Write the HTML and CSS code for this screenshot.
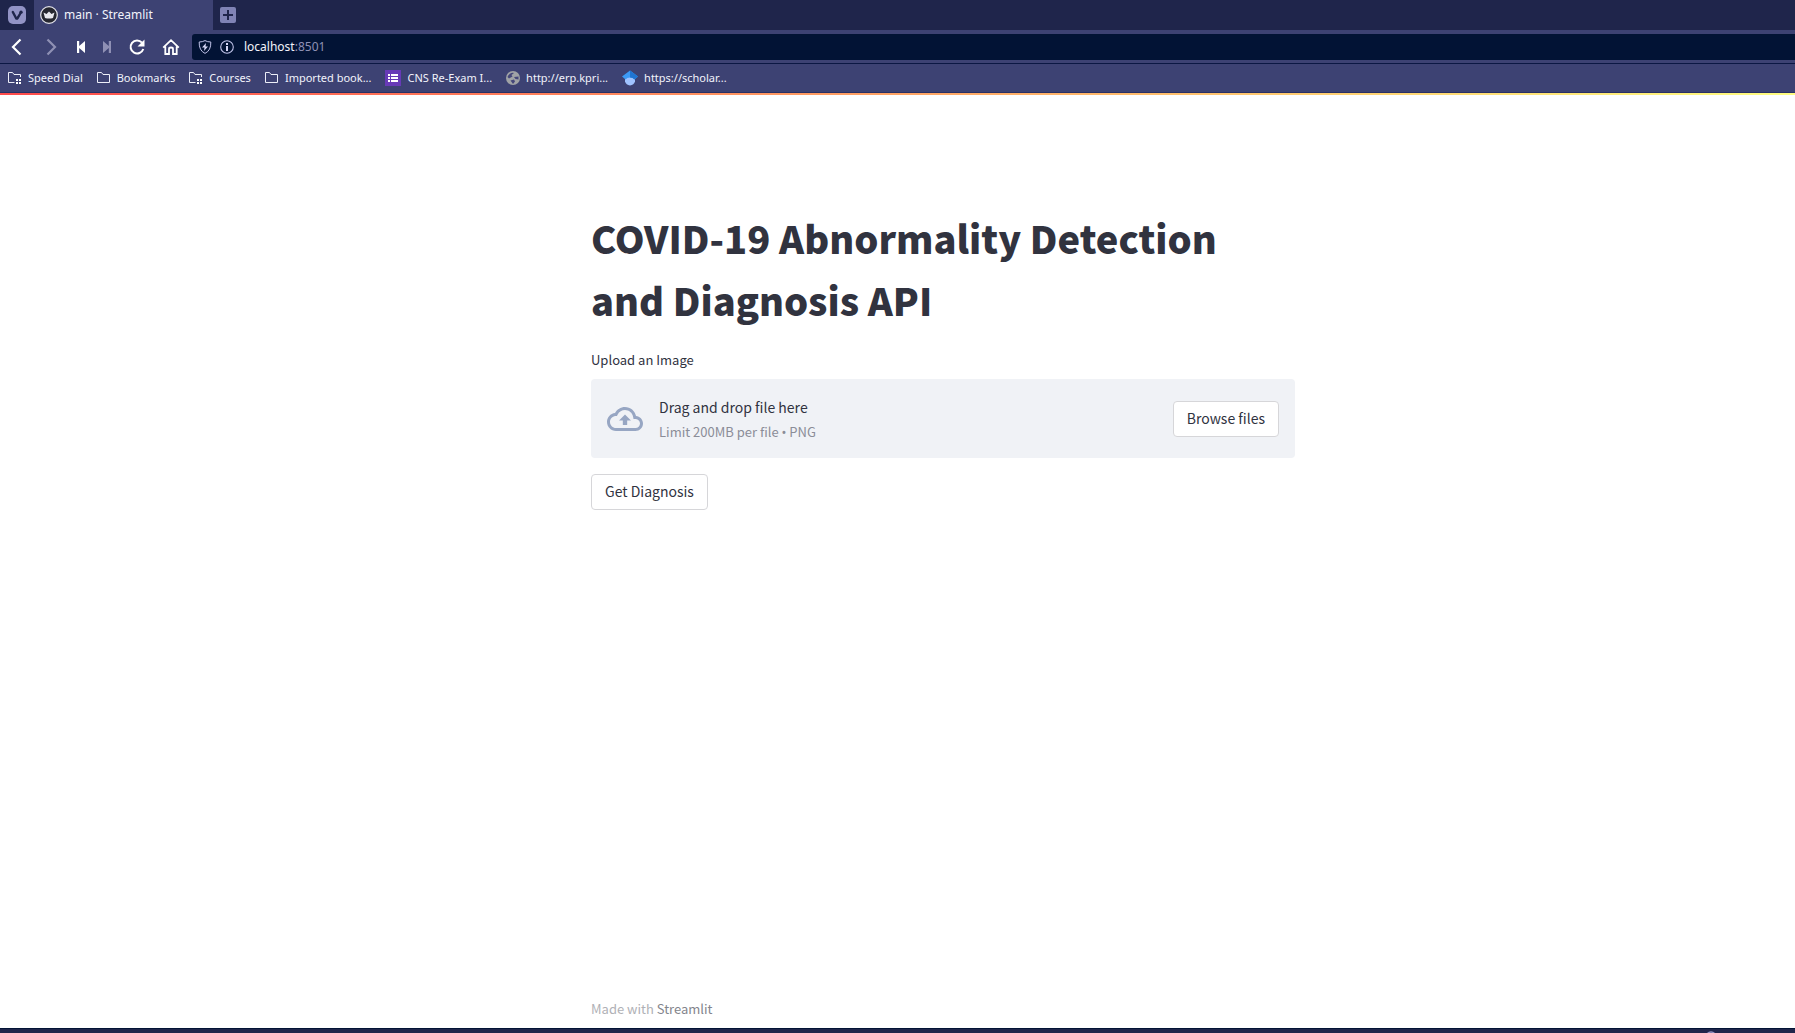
FILE: index.html
```html
<!DOCTYPE html>
<html lang="en">
<head>
<meta charset="utf-8">
<title>main · Streamlit</title>
<link rel="stylesheet" href="styles.css">
</head>
<body>
<header class="browser">
  <div class="tabs">
    <button class="icon-btn menu" aria-label="Menu">
      <svg width="18" height="18" viewBox="0 0 18 18"><rect width="18" height="18" rx="5" fill="#9293c5"/><path d="M4.800 6 8 12q.8 1.300 1.600 0L12 8" fill="none" stroke="#1f254b" stroke-width="2.400" stroke-linecap="round" stroke-linejoin="round"/><circle cx="13" cy="6.200" r="1.700" fill="#1f254b"/></svg>
    </button>
    <div class="tab">
      <svg width="18" height="18" viewBox="0 0 18 18"><circle cx="9" cy="9" r="8.300" fill="#262730" stroke="#e4e4ea" stroke-width="1.200"/><path d="M3.500 6.500 6.500 8 9 5.500 11.500 8l3-1.500L13 12q-4 1-8 0z" fill="#e8e8ee"/></svg>
      <span>main · Streamlit</span>
    </div>
    <button class="icon-btn new-tab" aria-label="New tab">
      <svg width="16" height="16" viewBox="0 0 16 16"><rect width="16" height="16" rx="2" fill="#8083b5"/><path d="M8 3v10M3 8h10" stroke="#1f254b" stroke-width="2"/></svg>
    </button>
  </div>
  <div class="toolbar">
    <nav class="nav">
      <button class="icon-btn" aria-label="Back"><svg width="18" height="18" viewBox="0 0 18 18"><path d="M12.500 1.500 5 9l7.500 7.500" fill="none" stroke="#fff" stroke-width="2.200"/></svg></button>
      <button class="icon-btn" aria-label="Forward"><svg width="18" height="18" viewBox="0 0 18 18"><path d="M5.500 1.500 13 9l-7.500 7.500" fill="none" stroke="#8f90b4" stroke-width="2.200"/></svg></button>
      <button class="icon-btn step" aria-label="Rewind"><svg width="18" height="18" viewBox="0 0 18 18"><path d="M5 3h2.200v5L13 3v12L7.200 10v5H5z" fill="#fff"/></svg></button>
      <button class="icon-btn step" aria-label="Fast forward"><svg width="18" height="18" viewBox="0 0 18 18"><path d="M13 3h-2.200v5L5 3v12l5.800-5v5H13z" fill="#8f90b4"/></svg></button>
      <button class="icon-btn" aria-label="Reload"><svg width="18" height="18" viewBox="0 0 18 18"><path d="M14 4.700A6.500 6.500 0 1 0 15.300 11" fill="none" stroke="#fff" stroke-width="2"/><path d="M16.500 1.500v7h-7z" fill="#fff"/></svg></button>
      <button class="icon-btn" aria-label="Home"><svg width="18" height="18" viewBox="0 0 18 18"><path d="M1.200 9.700 9 2.200l7.800 7.500M3.300 8.500V16H7v-5q0-1.500 2-1.500t2 1.500v5h3.700V8.500" fill="none" stroke="#fff" stroke-width="1.800"/></svg></button>
    </nav>
    <div class="address">
      <svg width="14" height="14" viewBox="0 0 14 14"><path d="M7 .6Q9.500 2 12.800 2q.4 8.400-5.800 11.400Q.8 10.400 1.200 2 4.500 2 7 .6z" fill="none" stroke="#bfc2e8"/><path d="M8 3 4 7.500h2.500L6 11l4-4.500H7.500z" fill="#d5d7f5"/></svg>
      <svg width="14" height="14" viewBox="0 0 14 14"><circle cx="7" cy="7" r="6.300" fill="none" stroke="#bfc2e8" stroke-width="1.100"/><path d="M6 3h2v2H6zM6 6h2v5H6z" fill="#d5d7f5"/></svg>
      <span class="url">localhost<span class="port">:8501</span></span>
    </div>
  </div>
  <nav class="bookmarks">
    <a href="#"><svg width="14" height="14" viewBox="0 0 14 14"><path d="M6.500 11.500h-6v-10h4l1.500 2h6.500V6" fill="none" stroke="#eceef8"/><path d="M8 8h2v2H8zM11 8h2v2h-2zM8 11h2v2H8zM11 11h2v2h-2z" fill="#fff"/></svg>Speed Dial</a>
    <a href="#"><svg width="14" height="14" viewBox="0 0 14 14"><path d="M.5 1.500h4l1.500 2h6.500v8H.5z" fill="none" stroke="#eceef8"/></svg>Bookmarks</a>
    <a href="#"><svg width="14" height="14" viewBox="0 0 14 14"><path d="M6.500 11.500h-6v-10h4l1.500 2h6.500V6" fill="none" stroke="#eceef8"/><path d="M8 8h2v2H8zM11 8h2v2h-2zM8 11h2v2H8zM11 11h2v2h-2z" fill="#fff"/></svg>Courses</a>
    <a href="#"><svg width="14" height="14" viewBox="0 0 14 14"><path d="M.5 1.500h4l1.500 2h6.500v8H.5z" fill="none" stroke="#eceef8"/></svg>Imported book...</a>
    <a href="#"><svg width="16" height="16" viewBox="0 0 16 16"><path d="M0 0h16v16H0z" fill="#673ab7"/><path d="M3 4h2v2H3zM6 4h7v2H6zM3 7h2v2H3zM6 7h7v2H6zM3 10h2v2H3zM6 10h7v2H6z" fill="#fff"/></svg>CNS Re-Exam I...</a>
    <a href="#"><svg width="14" height="14" viewBox="0 0 14 14"><circle cx="7" cy="7" r="7" fill="#a0a3a6"/><path d="M8 2 5.500 4l1 1.500L3 7.500 1.500 6A5.500 5.500 0 0 1 8 2zM8 6l4.500-.5v3L9.500 8zM4.500 9.500 8 8.500l1 2L7 13z" fill="#45477a"/></svg>http://erp.kpri...</a>
    <a href="#"><svg width="16" height="16" viewBox="0 0 16 16"><path d="M3 6h10v5.500q-1 3.500-5 4-4-.5-5-4z" fill="#a0c3ff"/><path d="M8 .5 0 6.500 3.500 9.500Q5 7.500 8 7.500t4.500 2L16 6.500z" fill="#3c9af5"/><path d="M8 .5 16 6.500l-3.500 3Q11 7.500 8 7.500z" fill="#1f74d2"/></svg>https://scholar...</a>
  </nav>
</header>
<div class="decoration"></div>
<main class="app">
  <div class="block">
    <h1>COVID-19 Abnormality Detection and Diagnosis API</h1>
    <label class="label" for="browse">Upload an Image</label>
    <section class="dropzone">
      <svg width="36" height="36" viewBox="0 0 24 24"><path fill="#97a6c3" d="M19.350 10.040C18.670 6.590 15.640 4 12 4 9.110 4 6.600 5.640 5.350 8.040 2.340 8.360 0 10.910 0 14c0 3.310 2.690 6 6 6h13c2.760 0 5-2.240 5-5 0-2.640-2.050-4.780-4.650-4.960zM19 18H6c-2.210 0-4-1.790-4-4 0-2.050 1.530-3.760 3.560-3.970l1.070-.11.500-.95C8.080 7.140 9.940 6 12 6c2.620 0 4.880 1.860 5.390 4.430l.3 1.500 1.530.11c1.560.1 2.780 1.410 2.780 2.960 0 1.650-1.350 3-3 3zM8 13h2.550v3h2.900v-3H16l-4-4z"/></svg>
      <div class="hint">
        <span class="title">Drag and drop file here</span>
        <span class="limit">Limit 200MB per file <span class="dot">•</span> PNG</span>
      </div>
      <button class="btn" id="browse">Browse files</button>
    </section>
    <button class="btn">Get Diagnosis</button>
  </div>
  <footer class="footer">Made with <a href="#">Streamlit</a></footer>
</main>
<div class="status">
  <svg width="12" height="12" viewBox="0 0 12 12"><circle cx="6" cy="6" r="5" fill="none" stroke="#9293c5" stroke-width="1.500"/></svg>
</div>
</body>
</html>
```

FILE: styles.css
```css
* { box-sizing: border-box; }

body {
  margin: 0;
  height: 100vh;
  display: flex;
  flex-direction: column;
  overflow: hidden;
  background: #fff;
  color: #31333f;
  font-family: "Noto Sans CJK SC", "Open Sans", sans-serif;
}

button { font: inherit; color: inherit; cursor: pointer; }
svg { display: block; flex: none; }

/* Browser chrome */
.browser {
  flex: none;
  background: #3d4273;
  color: #f2f3fb;
  font-family: "Noto Sans", sans-serif;
  font-size: 12px;
  line-height: 16px;
}

.icon-btn {
  display: flex;
  align-items: center;
  justify-content: center;
  width: 34px;
  border: 0;
  padding: 0;
  background: none;
}

.tabs { display: flex; height: 30px; background: #1f254b; }
.tab {
  display: flex;
  align-items: center;
  gap: 6px;
  width: 179px;
  padding: 0 6px;
  background: #3d4273;
}
.new-tab { width: 30px; }

.toolbar {
  display: flex;
  align-items: center;
  height: 34px;
  padding-top: 1px;
  border-bottom: 1px solid #0b1743;
}
.nav { display: flex; padding-right: 4px; }
.step { width: 26px; }
.address {
  flex: 1;
  display: flex;
  align-items: center;
  gap: 8px;
  height: 26px;
  padding: 0 6px;
  border-radius: 3px 0 0 3px;
  background: #021335;
}
.url { padding-left: 2px; }
.port { color: #8f90b4; }

.bookmarks {
  display: flex;
  align-items: center;
  gap: 14px;
  height: 29px;
  padding: 0 8px;
  border-bottom: 1px solid #2a3165;
  font-size: 11px;
}
.bookmarks a {
  display: flex;
  align-items: center;
  gap: 6px;
  color: inherit;
  text-decoration: none;
}

/* Streamlit page */
.decoration {
  flex: none;
  height: 2px;
  background: linear-gradient(90deg, #ff4b4b, #fffd80);
}

.app {
  flex: 1;
  display: flex;
  flex-direction: column;
  align-items: center;
  justify-content: space-between;
  padding: 112px 0 9px 91px;
}
.block, .footer { width: 100%; max-width: 704px; }

h1 {
  margin: 0 0 19px;
  font-size: 38px;
  font-weight: 900;
  line-height: 62px;
}
.label { display: block; margin-bottom: 9px; font-size: 13px; line-height: 20px; }

.dropzone {
  display: flex;
  align-items: center;
  margin-bottom: 16px;
  padding: 16px;
  border-radius: 4px;
  background: #f0f2f6;
}
.hint { display: flex; flex-direction: column; flex: 1; gap: 3px; margin-left: 16px; }
.title { font-size: 14px; line-height: 24px; }
.limit { font-size: 13px; line-height: 20px; color: #8b8d98; }
.dot { font-family: "Noto Sans", sans-serif; }

.btn {
  padding: 4px 13px 6px;
  border: 1px solid #d6d6d9;
  border-radius: 4px;
  background: #fff;
  font-size: 14px;
  line-height: 24px;
}

.footer { font-size: 13px; line-height: 20px; color: #b0b1b6; }
.footer a { color: #83858c; text-decoration: none; }

.status {
  flex: none;
  height: 5px;
  padding-left: 95%;
  overflow: hidden;
  border-top: 1px solid #021335;
  background: #1f254b;
}
.status svg { margin-top: 2px; }
```
